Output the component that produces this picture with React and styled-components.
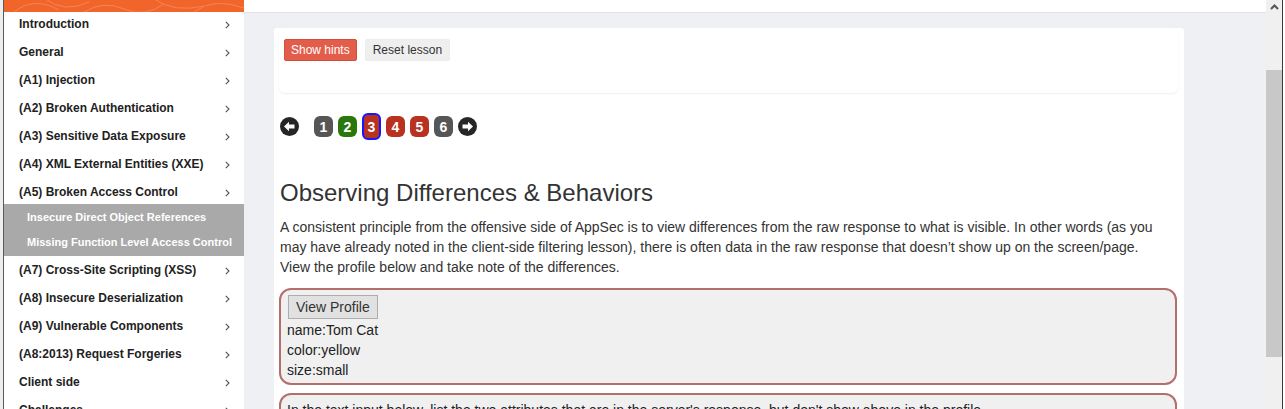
import React from 'react'
import styled, { createGlobalStyle } from 'styled-components'

const Global = createGlobalStyle`
	html, body {
		margin: 0;
		padding: 0;
		overflow: hidden;
		background: #fff;
	}
	body {
		font-family: "Liberation Sans", Arial, Helvetica, sans-serif;
	}
`

const Frame = styled.div`
	display: flex;
	width: 1285px;
	height: 409px;
	overflow: hidden;
`

const WindowEdge = styled.div`
	width: 3px;
	background: #eeeeee;
	border-right: 1px solid #5a5a5a;
`

const Sidebar = styled.nav`
	width: 240px;
	flex: none;
	background: #fff;
	overflow: hidden;
	display: flex;
	flex-direction: column;
`

const Brand = styled.div`
	position: relative;
	z-index: 1;
	height: 12px;
	flex: none;
	background: #f2652a;
	overflow: hidden;
	svg { display: block; }
`

const Menu = styled.ul`
	list-style: none;
	margin: -2px 0 0;
	padding: 0;
`

const MenuItem = styled.li`
	display: flex;
	align-items: center;
	justify-content: space-between;
	height: 28px;
	padding: 0 14px 0 15px;
	font-size: 12px;
	font-weight: bold;
	color: #222;
	white-space: nowrap;
	svg { margin-top: 2px; }
`

const SubMenu = styled.ul`
	list-style: none;
	margin: -2px 0 0;
	padding: 1px 0 1px;
	background: #a9a9a9;
`

const SubItem = styled.li`
	height: 25px;
	line-height: 25px;
	padding-left: 23px;
	font-size: 11px;
	font-weight: bold;
	color: #fff;
	white-space: nowrap;
`

const Main = styled.main`
	flex: 1;
	display: flex;
	flex-direction: column;
	background: #eef0f4;
	min-width: 0;
`

const TopBar = styled.div`
	height: 12px;
	flex: none;
	background: #fff;
	border-bottom: 1px solid #e2e3e6;
`

const Content = styled.div`
	padding: 15px 0 0 30px;
`

const Card = styled.section`
	width: 910px;
	background: #fff;
	border-radius: 3px 3px 0 0;
	padding: 0 6px 0 5px;
	box-sizing: border-box;
	color: #333;
`

const HintsBox = styled.div`
	height: 65px;
	box-sizing: border-box;
	padding: 11px 5px 0;
	border-radius: 6px;
	box-shadow: 0 1px 2px rgba(0, 0, 0, 0.07);
	display: flex;
	gap: 8px;
	align-items: flex-start;
`

const Button = styled.button`
	height: 22px;
	padding: 0 ${p => (p.danger ? 6 : 7)}px;
	font-family: "Liberation Sans", Arial, sans-serif;
	font-size: 12px;
	border-radius: 2px;
	border: 1px solid ${p => (p.danger ? '#d44c3b' : '#ededed')};
	background: ${p => (p.danger ? '#e35d4b' : '#efefef')};
	color: ${p => (p.danger ? '#fff' : '#333')};
`

const Body = styled.div`
	padding: 0 0 0 1px;
`

const Pager = styled.div`
	display: flex;
	align-items: center;
	height: 27px;
	margin-top: 20px;
	svg { display: block; }
`

const ArrowWrap = styled.span`
	display: flex;
	margin-right: ${p => p.gap || 0}px;
`

const PageNum = styled.span`
	display: flex;
	align-items: center;
	justify-content: center;
	box-sizing: border-box;
	width: 19px;
	height: ${p => (p.current ? 27 : 21)}px;
	margin-right: 5px;
	border-radius: 6px;
	background: ${p => p.color};
	border: ${p => (p.current ? '2.5px solid #1717ff' : 'none')};
	color: #fff;
	font-size: 14px;
	font-weight: bold;
`

const Title = styled.h2`
	margin: 40px 0 0;
	font-size: 24px;
	font-weight: normal;
	line-height: 26px;
	color: #333;
`

const Para = styled.p`
	margin: 11px 0 0;
	width: 886px;
	font-size: 14px;
	line-height: 20px;
	color: #333;
`

const AttackBox = styled.div`
	margin-top: ${p => p.top}px;
	width: 898px;
	box-sizing: border-box;
	margin-left: -1px;
	background: #f0f0f0;
	border: 2px solid #b36f6b;
	border-radius: 12px;
	padding: 5px 6px 3px;
	font-size: 14px;
	line-height: 20px;
	color: #222;
`

const ProfileButton = styled.button`
	display: block;
	height: 24px;
	margin: 0 0 1px 1px;
	padding: 0 7px;
	font-family: "Liberation Sans", Arial, sans-serif;
	font-size: 14px;
	color: #333;
	background: #e1e1e1;
	border: 1px solid #adadad;
	border-radius: 0;
`

const Scrollbar = styled.div`
	width: 16px;
	flex: none;
	background: #f0f0f0;
	border-right: 1px solid #3a3a3a;
	margin-right: 2px;
	display: flex;
	flex-direction: column;
	align-items: center;
`

const UpArrow = styled.div`
	height: 70px;
	padding-top: 4px;
	box-sizing: border-box;
	svg { display: block; }
`

const Thumb = styled.div`
	width: 16px;
	height: 287px;
	background: #c8c8c8;
`

const Chevron = () => (
	<svg width="5" height="8" viewBox="0 0 5 8">
		<polyline points="0.8,0.8 4,4 0.8,7.2" fill="none" stroke="#555" strokeWidth="1.1" />
	</svg>
)

const CircleArrow = ({ dir }) => (
	<svg width="19" height="19" viewBox="0 0 19 19">
		<circle cx="9.5" cy="9.5" r="9.5" fill="#262626" />
		<g transform={dir === 'left' ? '' : 'translate(19 0) scale(-1 1)'}>
			<path d="M4 9.5 L9 4.8 L9 7.6 L14.5 7.6 L14.5 11.4 L9 11.4 L9 14.2 Z" fill="#fff" />
		</g>
	</svg>
)

const menu = [
	'Introduction',
	'General',
	'(A1) Injection',
	'(A2) Broken Authentication',
	'(A3) Sensitive Data Exposure',
	'(A4) XML External Entities (XXE)',
	'(A5) Broken Access Control',
]

const menuAfter = [
	'(A7) Cross-Site Scripting (XSS)',
	'(A8) Insecure Deserialization',
	'(A9) Vulnerable Components',
	'(A8:2013) Request Forgeries',
	'Client side',
	'Challenges',
]

const pages = [
	{ n: 1, color: '#565656' },
	{ n: 2, color: '#2a780d' },
	{ n: 3, color: '#b8321f', current: true },
	{ n: 4, color: '#b8321f' },
	{ n: 5, color: '#b8321f' },
	{ n: 6, color: '#565656' },
]

export default function App() {
	return (
		<Frame>
			<Global />
			<WindowEdge />
			<Sidebar>
				<Brand>
					<svg width="240" height="12" viewBox="0 0 240 12">
						<g fill="none" stroke="#f58457" strokeWidth="1">
							<path d="M10 12 Q30 -4 55 10" />
							<path d="M40 -2 Q60 14 85 2" />
							<path d="M80 12 Q100 0 120 9 T160 4" />
							<path d="M150 -1 Q170 13 200 6" />
							<path d="M190 12 Q210 -3 240 8" />
						</g>
					</svg>
				</Brand>
				<Menu>
					{menu.map(m => (
						<MenuItem key={m}>
							<span>{m}</span>
							<Chevron />
						</MenuItem>
					))}
				</Menu>
				<SubMenu>
					<SubItem>Insecure Direct Object References</SubItem>
					<SubItem>Missing Function Level Access Control</SubItem>
				</SubMenu>
				<Menu>
					{menuAfter.map((m, i) => (
						<MenuItem key={m} style={i === 0 ? { marginTop: 2 } : undefined}>
							<span>{m}</span>
							<Chevron />
						</MenuItem>
					))}
				</Menu>
			</Sidebar>
			<Main>
				<TopBar />
				<Content>
					<Card>
						<HintsBox>
							<Button danger>Show hints</Button>
							<Button>Reset lesson</Button>
						</HintsBox>
						<Body>
							<Pager>
								<ArrowWrap gap={15}>
									<CircleArrow dir="left" />
								</ArrowWrap>
								{pages.map(p => (
									<PageNum key={p.n} color={p.color} current={p.current}>
										{p.n}
									</PageNum>
								))}
								<ArrowWrap>
									<CircleArrow dir="right" />
								</ArrowWrap>
							</Pager>
							<Title>Observing Differences &amp; Behaviors</Title>
							<Para>
								A consistent principle from the offensive side of AppSec is to view differences from the raw
								response to what is visible. In other words (as you may have already noted in the client-side
								filtering lesson), there is often data in the raw response that doesn’t show up on the
								screen/page. View the profile below and take note of the differences.
							</Para>
							<AttackBox top={11}>
								<ProfileButton>View Profile</ProfileButton>
								<div>name:Tom Cat</div>
								<div>color:yellow</div>
								<div>size:small</div>
							</AttackBox>
							<AttackBox top={8}>
								In the text input below, list the two attributes that are in the server's response, but don't
								show above in the profile.
							</AttackBox>
						</Body>
					</Card>
				</Content>
			</Main>
			<Scrollbar>
				<UpArrow>
					<svg width="9" height="6" viewBox="0 0 9 6">
						<polyline points="1,5 4.5,1.5 8,5" fill="none" stroke="#555" strokeWidth="2" />
					</svg>
				</UpArrow>
				<Thumb />
			</Scrollbar>
		</Frame>
	)
}
